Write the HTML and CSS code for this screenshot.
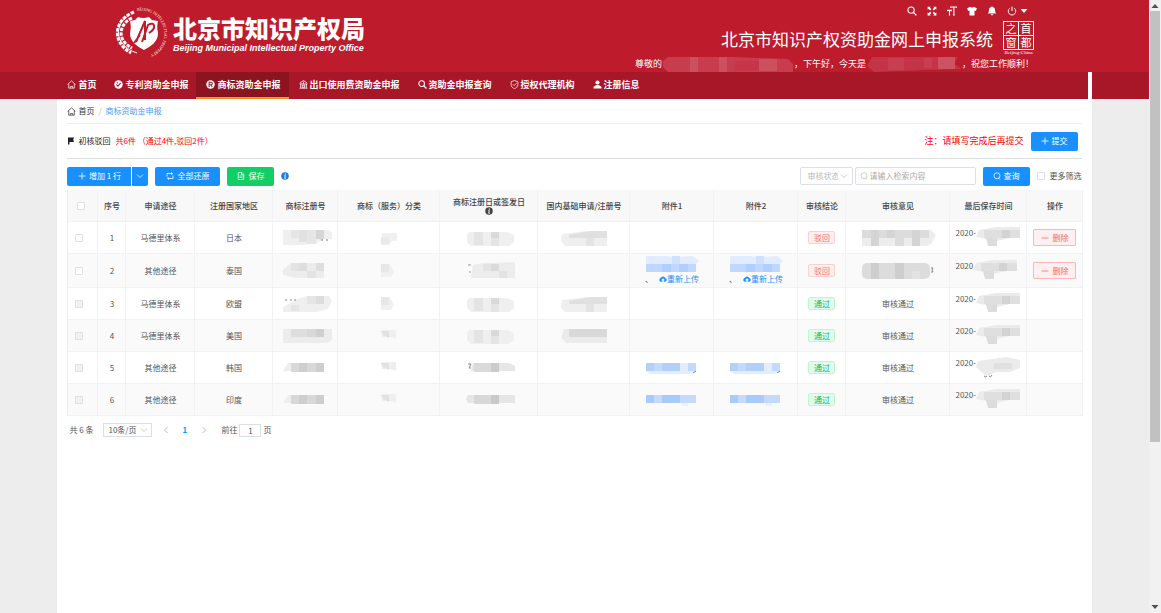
FILE: index.html
```html
<!DOCTYPE html>
<html lang="zh-CN">
<head>
  <meta charset="UTF-8" />
  <meta name="viewport" content="width=device-width, initial-scale=1.0"/>
  <title>北京市知识产权资助金网上申报系统</title>
  <link rel="stylesheet" href="styles.css">
</head>
<body>
  <svg class="sprite" aria-hidden="true">
    <!-- icons -->
    <symbol id="i-home" viewBox="0 0 16 16"><path d="M1 8L8 1.5 15 8M3 6.5V14.5H13V6.5M6 14V11.5H10V14" fill="none" stroke="currentColor" stroke-width="1.3"/></symbol>
    <symbol id="i-patent" viewBox="0 0 16 16"><circle cx="8" cy="8" r="7.5" fill="currentColor"/><path d="M4 8l3 3 5-6M5 4l2 2" fill="none" stroke="#a71728" stroke-width="1.8"/></symbol>
    <symbol id="i-reg" viewBox="0 0 16 16"><circle cx="8" cy="8" r="7.5" fill="currentColor"/><path d="M5.5 12.5V4H9a2.2 2.2 0 0 1 0 4.5H5.5M8.5 8.5L11 12.5" fill="none" stroke="#8c1420" stroke-width="1.8"/></symbol>
    <symbol id="i-export" viewBox="0 0 16 16"><path d="M2 5L8 1l6 4M1 7h14M3 7v7M13 7v7M1 14.5h14M6 9h4v4H6zM8 3v4" fill="none" stroke="currentColor" stroke-width="1.5"/></symbol>
    <symbol id="i-search" viewBox="0 0 16 16"><circle cx="6.5" cy="6.5" r="5" fill="none" stroke="currentColor" stroke-width="1.8"/><path d="M10 10l5 5" stroke="currentColor" stroke-width="2.2"/></symbol>
    <symbol id="i-find" viewBox="0 0 16 16"><circle cx="8" cy="7.5" r="6" fill="none" stroke="currentColor" stroke-width="1.5"/><path d="M11 12l3 3" stroke="currentColor" stroke-width="1.5"/></symbol>
    <symbol id="i-shield" viewBox="0 0 16 16"><path d="M8 1l6 2v5c0 4-3 6-6 7.5C5 14 2 12 2 8V3zM5 7.5l2.5 2.5L11.5 5.5" fill="none" stroke="currentColor" stroke-width="1.3"/></symbol>
    <symbol id="i-user" viewBox="0 0 16 16"><circle cx="8" cy="4.5" r="3.7" fill="currentColor"/><path d="M1 15v-3l5-3h4l5 3v3z" fill="currentColor"/></symbol>
    <symbol id="i-expand" viewBox="0 0 16 16"><path d="M1 1h5L4.5 2.5 7 5 5 7 2.5 4.5 1 6zM15 1v5l-1.5-1.5L11 7 9 5l2.5-2.5L10 1zM1 15v-5l1.5 1.5L5 9l2 2-2.5 2.5L6 15zM15 15h-5l1.5-1.5L9 11l2-2 2.5 2.5L15 10z" fill="currentColor"/></symbol>
    <symbol id="i-font" viewBox="0 0 16 16"><path d="M6 3V1.5h10V3M11 1.5V15M9.5 14.5h3M1 8.5V7h6v1.5M4 7v8M3 14.5h2" fill="none" stroke="currentColor" stroke-width="1.7"/></symbol>
    <symbol id="i-shirt" viewBox="0 0 16 16"><path d="M5 1q3 3 6 0l5 3-2 4-2-1v8H4V7L2 8 0 4z" fill="currentColor"/></symbol>
    <symbol id="i-bell" viewBox="0 0 16 16"><path d="M8 0l1 1.5c3 .5 4 3 4 5.5 0 3 1 4 2 5H1c1-1 2-2 2-5 0-2.5 1-5 4-5.5zM6 13h4q-2 4-4 0z" fill="currentColor"/></symbol>
    <symbol id="i-power" viewBox="0 0 16 16"><path d="M4.5 3.5a6 6 0 1 0 7 0M8 1v7" fill="none" stroke="currentColor" stroke-width="1.6"/></symbol>
    <symbol id="i-caret" viewBox="0 0 16 16"><path d="M1 4h14l-7 8z" fill="currentColor"/></symbol>
    <symbol id="i-flag" viewBox="0 0 16 16"><path d="M2 1h12l-1.5 4.5L14 10H5v5H2z" fill="currentColor"/></symbol>
    <symbol id="i-plus" viewBox="0 0 16 16"><path d="M8 1v14M1 8h14" stroke="currentColor" stroke-width="1.6"/></symbol>
    <symbol id="i-minus" viewBox="0 0 16 16"><path d="M1 8h14" stroke="currentColor" stroke-width="1.6"/></symbol>
    <symbol id="i-down" viewBox="0 0 16 16"><path d="M2 5l6 6 6-6" fill="none" stroke="currentColor" stroke-width="1.6"/></symbol>
    <symbol id="i-left" viewBox="0 0 16 16"><path d="M11 2L5 8l6 6" fill="none" stroke="currentColor" stroke-width="1.6"/></symbol>
    <symbol id="i-right" viewBox="0 0 16 16"><path d="M5 2l6 6-6 6" fill="none" stroke="currentColor" stroke-width="1.6"/></symbol>
    <symbol id="i-refresh" viewBox="0 0 16 16"><path d="M2 9V3h10M10 1l3 2-2 3M14 7v6H4M6 15l-3-2 2-3" fill="none" stroke="currentColor" stroke-width="1.6"/></symbol>
    <symbol id="i-doc" viewBox="0 0 16 16"><path d="M2.5 1H10l3.5 3.5V15h-11zM9 1v4.5h4M5 8h6M5 11h6" fill="none" stroke="currentColor" stroke-width="1.5"/></symbol>
    <symbol id="i-info" viewBox="0 0 16 16"><circle cx="8" cy="8" r="7.5" fill="currentColor"/><path d="M8.5 3v2.5M7 7h1.5L7.5 12.5H9.5" fill="none" stroke="#fff" stroke-width="2"/></symbol>
    <symbol id="i-cloud" viewBox="0 0 16 16"><path d="M4 13.5a3.8 3.8 0 0 1-.5-7.5 4.8 4.8 0 0 1 9 0A3.8 3.8 0 0 1 12 13.5H9.5V10.5H12L8 6.500 4 10.5h2.5v3z" fill="currentColor"/></symbol>

    <!-- masks over private values -->
    <symbol id="m-num1" viewBox="0 0 56 20"><path d="M6 2H52L55 5V11H47L40 15 26 17H6z" fill="#efefef"/><path d="M14 2h8v8h-8zM30 2h9v14h-9z" fill="#e6e6e6"/><path d="M22 2h8v12h-8z" fill="#e1e1e1"/><path d="M39 2h8v9h-8z" fill="#d6d6d6"/><path d="M44 12h2M49 12h2" stroke="#777"/></symbol>
    <symbol id="m-num2" viewBox="0 0 56 20"><path d="M6 9L14 2H47V17H20L6 14z" fill="#ececec"/><path d="M14 2h8v8h-8zM30 10h9v7h-9z" fill="#e3e3e3"/><path d="M22 2h8v8h-8zM39 2h8v8h-8z" fill="#dedede"/></symbol>
    <symbol id="m-num3" viewBox="0 0 56 20"><path d="M20 5L30 2H52L55 7 51 15 40 18H6V13z" fill="#efefef"/><path d="M30 2h9v8h-9zM14 11h8v6h-8z" fill="#e5e5e5"/><path d="M39 2h8v8h-8z" fill="#dcdcdc"/><path d="M8 6h2M13 6h2M17 6h2" stroke="#888"/></symbol>
    <symbol id="m-num4" viewBox="0 0 56 20"><path d="M6 3H55V14L50 17H6z" fill="#ececec"/><path d="M14 3h33v8H14z" fill="#dedede"/><path d="M30 3h9v8h-9z" fill="#d8d8d8"/><path d="M39 3h8v8h-8z" fill="#cfcfcf"/></symbol>
    <symbol id="m-num5" viewBox="0 0 56 20"><path d="M6 13l5-8h3v8z" fill="#eee"/><path d="M14 5h33v9H14z" fill="#d8d8d8"/><path d="M22 5h8v9h-8zM39 5h8v9h-8z" fill="#cecece"/></symbol>
    <symbol id="m-cat1" viewBox="0 0 20 20"><path d="M3 5h15v8h-5l-3 4H2z" fill="#f0f0f0"/><path d="M2 9h8v7H2z" fill="#e9e9e9"/></symbol>
    <symbol id="m-cat2" viewBox="0 0 20 20"><path d="M2 3h9l4 8-3 5H2z" fill="#f0f0f0"/><path d="M2 3h8v8H2z" fill="#e7e7e7"/></symbol>
    <symbol id="m-cat3" viewBox="0 0 20 20"><path d="M2 4h15v9l-6-2H3z" fill="#efefef"/><path d="M2 5h8v7L4 9z" fill="#e2e2e2"/></symbol>
    <symbol id="m-date1" viewBox="0 0 60 20"><path d="M10 4H48L55 7V14L50 18H12L8 14V7z" fill="#efefef"/><path d="M15 4h9v13h-9zM32 10h8v8h-8z" fill="#e4e4e4"/><path d="M32 4h8v6h-8z" fill="#d9d9d9"/></symbol>
    <symbol id="m-date2" viewBox="0 0 60 20"><path d="M14 4L24 2 56 1V17H12z" fill="#ececec"/><path d="M24 3h8v7h-8zM40 10h8v7h-8z" fill="#e3e3e3"/><path d="M32 3h8v7h-8z" fill="#dadada"/><path d="M9 4h3M10 11h2" stroke="#999"/></symbol>
    <symbol id="m-date5" viewBox="0 0 60 20"><path d="M14 5H50L56 8V13H12z" fill="#e6e6e6"/><path d="M15 5h25v9H15z" fill="#dadada"/><path d="M32 5h8v9h-8z" fill="#cbcbcb"/><path d="M9 6h3l-2 4h2" fill="none" stroke="#888"/></symbol>
    <symbol id="m-date6" viewBox="0 0 60 20"><path d="M9 5H56V13H9L7 9z" fill="#e6e6e6"/><path d="M15 5h25v9H15z" fill="#d8d8d8"/><path d="M32 5h8v9h-8z" fill="#c9c9c9"/></symbol>
    <symbol id="m-base1" viewBox="0 0 60 20"><path d="M8 6L34 3H53V18H11L7 13z" fill="#efefef"/><path d="M15 7L36 3H53V10H15z" fill="#e0e0e0"/><path d="M32 10h8v8h-8z" fill="#e4e4e4"/></symbol>
    <symbol id="m-base4" viewBox="0 0 60 20"><path d="M10 3H53V17H12L7 12z" fill="#ebebeb"/><path d="M15 3h38v8H15z" fill="#d9d9d9"/></symbol>
    <symbol id="m-file2" viewBox="0 0 56 17"><path d="M2 0h18l14 1 15-1 6 5-4 4H2z" fill="#e1ecff"/><path d="M2 8h50v8H2z" fill="#bfd8ff"/><path d="M18 8h9v8h-9zM35 8h9v8h-9z" fill="#b0ceff"/><path d="M28 0h8v8h-8z" fill="#cfe1ff"/></symbol>
    <symbol id="m-file5" viewBox="0 0 56 17"><path d="M2 4h50v8l-6 3H6L2 12z" fill="#e3edfe"/><path d="M2 4h34v8H2z" fill="#b2d0fa"/><path d="M44 4h8v8h-8zM10 4h8v8h-8z" fill="#c2dafb"/><path d="M49 14l3-2" stroke="#5585c9"/></symbol>
    <symbol id="m-file6" viewBox="0 0 56 17"><path d="M2 4h50v8H2z" fill="#c3dafd"/><path d="M2 4h8v8H2zM18 4h18v8H18z" fill="#a9cbfb"/><path d="M38 12h6v3h-6z" fill="#e5efff"/></symbol>
    <symbol id="m-op1" viewBox="0 0 76 20"><path d="M2 2H71L76 7 72 15 68 18H2z" fill="#ededed"/><path d="M2 2h67v8H2z" fill="#dcdcdc"/><path d="M11 2h8v16h-8zM27 2h8v8h-8zM52 2h8v16h-8z" fill="#d4d4d4"/><path d="M35 10h9v8h-9z" fill="#dcdcdc"/></symbol>
    <symbol id="m-op2" viewBox="0 0 76 20"><rect x="2" y="2" width="68" height="16" rx="5" fill="#dcdcdc"/><path d="M11 2h8v16h-8zM35 2h9v16h-9z" fill="#cecece"/><path d="M52 10h8v8h-8z" fill="#e3e3e3"/><path d="M71 7h2l-1 2 1 2h-2" fill="none" stroke="#888" stroke-width="1"/></symbol>
    <symbol id="m-time1" viewBox="0 0 46 22"><path d="M3 3L20 0H44V11H34L20 14 0 10z" fill="#ebebeb"/><path d="M8 3h36v8H8z" fill="#dfdfdf"/><path d="M26 3h8v8h-8z" fill="#d3d3d3"/><path d="M10 11h11v8H12z" fill="#dcdcdc"/></symbol>
    <symbol id="m-time5" viewBox="0 0 46 22"><path d="M2 4L30 0 44 3V11L34 15H20L10 19 0 10z" fill="#ebebeb"/><path d="M18 6h18v6H18z" fill="#e0e0e0"/><path d="M8 19q2 2 3 0M13 19q2 2 3-1" fill="none" stroke="#888"/></symbol>
    <symbol id="m-hello" viewBox="0 0 132 16"><path d="M6 1H70L126 3 131 8V16H6L1 11V5z" fill="#c73d4e"/><path d="M28 1h8v15h-8zM57 1h8v15h-8zM97 3h18v12H97z" fill="#cc5060"/><path d="M73 5h24v10H73z" fill="#c53748"/></symbol>
    <symbol id="m-today" viewBox="0 0 96 16"><path d="M6 1H92L88 8 96 13 60 14 8 16 1 10z" fill="#c33546"/><path d="M22 2h16v12H22zM58 2h8v10h-8z" fill="#c73f50"/><path d="M72 1h17v12H72z" fill="#cc5362"/></symbol>
  </svg>

  <div class="window">
    <div class="page">
      <header class="header">
        <div class="brand">
          <svg class="emblem" viewBox="0 0 56 56">
            <defs><path id="ring" d="M22 6A23 23 0 1 1 18 50"/></defs>
            <text class="ring-text"><textPath href="#ring">BEIJING INTELLECTUAL PROPERTY</textPath></text>
            <g fill="none" stroke="#fff" stroke-width="3" stroke-dasharray="3.5 1.2">
              <path d="M19 7C0 14-5 36 16 48"/>
              <path d="M17 13C4 19 1 35 17 43"/>
            </g>
            <path d="M15 10C-1 18-2 40 22 48" fill="none" stroke="#fff" stroke-width="1"/>
            <path d="M15 16l5-1 3-3q5 2 11 0l3 3 6 1c-1 5-1 7 0 12 0 9-7 13-14 17-7-4-14-8-14-17 1-5 1-7 0-12z" fill="#fff"/>
            <path d="M21 37L30 16V35M27 37L33 20C40 16 42 23 34 28M25 30l-6 8" fill="none" stroke="#be1b2c" stroke-width="2"/>
          </svg>
          <div class="brand-text">
            <div class="brand-cn">北京市知识产权局</div>
            <div class="brand-en">Beijing Municipal Intellectual Property Office</div>
          </div>
        </div>
        <div class="header-right">
          <div class="tools">
            <button aria-label="搜索"><svg class="icon-md"><use href="#i-search"/></svg></button>
            <button aria-label="全屏"><svg class="icon-md"><use href="#i-expand"/></svg></button>
            <button aria-label="字号"><svg class="icon-md"><use href="#i-font"/></svg></button>
            <button aria-label="主题"><svg class="icon-md"><use href="#i-shirt"/></svg></button>
            <button aria-label="通知"><svg class="icon-md"><use href="#i-bell"/></svg></button>
            <button aria-label="退出" class="power"><svg class="icon-md"><use href="#i-power"/></svg><svg class="icon-sm"><use href="#i-caret"/></svg></button>
          </div>
          <div class="system">
            <h1>北京市知识产权资助金网上申报系统</h1>
            <div class="stamp">
              <div class="stamp-grid"><span>之</span><span>首</span><span>窗</span><span>都</span></div>
              <div class="stamp-en">Beijing-China</div>
            </div>
          </div>
          <div class="hello">
            <span>尊敬的</span><svg class="mask-hello"><use href="#m-hello"/></svg><span>，下午好，今天是</span><svg class="mask-today"><use href="#m-today"/></svg><span>，祝您工作顺利！</span>
          </div>
        </div>
      </header>

      <nav class="nav">
        <div class="nav-inner">
          <a href="#"><svg class="icon"><use href="#i-home"/></svg>首页</a>
          <a href="#"><svg class="icon"><use href="#i-patent"/></svg>专利资助金申报</a>
          <a href="#" class="active"><svg class="icon"><use href="#i-reg"/></svg>商标资助金申报</a>
          <a href="#"><svg class="icon"><use href="#i-export"/></svg>出口使用费资助金申报</a>
          <a href="#"><svg class="icon"><use href="#i-search"/></svg>资助金申报查询</a>
          <a href="#"><svg class="icon"><use href="#i-shield"/></svg>授权代理机构</a>
          <a href="#"><svg class="icon"><use href="#i-user"/></svg>注册信息</a>
        </div>
      </nav>

      <main class="content">
        <div class="breadcrumb">
          <svg class="icon"><use href="#i-home"/></svg><a href="#">首页</a><i>/</i><a href="#" class="current">商标资助金申报</a>
        </div>

        <div class="status">
          <svg class="icon-sm"><use href="#i-flag"/></svg>
          <span>初核驳回</span>
          <span class="count">共6件 （通过4件,驳回2件）</span>
          <span class="note">注：请填写完成后再提交</span>
          <button class="btn"><svg class="icon-sm"><use href="#i-plus"/></svg>提交</button>
        </div>

        <div class="toolbar">
          <div class="btn-group">
            <button class="btn btn-add"><svg class="icon-sm"><use href="#i-plus"/></svg>增加 1 行</button>
            <button class="btn btn-more" aria-label="更多"><svg class="icon-sm"><use href="#i-down"/></svg></button>
          </div>
          <button class="btn btn-reset"><svg class="icon-sm"><use href="#i-refresh"/></svg>全部还原</button>
          <button class="btn btn-save"><svg class="icon-sm"><use href="#i-doc"/></svg>保存</button>
          <svg class="icon-sm tip"><use href="#i-info"/></svg>
          <div class="filters">
            <div class="select state">
              <select aria-label="审核状态"><option>审核状态</option></select>
              <svg class="icon-sm"><use href="#i-down"/></svg>
            </div>
            <div class="search">
              <svg class="icon-sm"><use href="#i-find"/></svg>
              <input type="text" placeholder="请输入检索内容" aria-label="检索内容">
            </div>
            <button class="btn"><svg class="icon-sm"><use href="#i-find"/></svg>查询</button>
            <label class="more"><input type="checkbox">更多筛选</label>
          </div>
        </div>

        <table>
          <colgroup>
            <col class="c-check"><col class="c-no"><col class="c-way"><col class="c-area"><col class="c-num"><col class="c-cat"><col class="c-date"><col class="c-base"><col class="c-file"><col class="c-file"><col class="c-result"><col class="c-opinion"><col class="c-time"><col class="c-op">
          </colgroup>
          <thead>
            <tr>
              <th class="check-all"><input type="checkbox" aria-label="全选"></th>
              <th>序号</th>
              <th>申请途径</th>
              <th>注册国家地区</th>
              <th>商标注册号</th>
              <th>商标（服务）分类</th>
              <th>商标注册日或签发日<svg class="icon-sm th-tip"><use href="#i-info"/></svg></th>
              <th>国内基础申请/注册号</th>
              <th>附件1</th>
              <th>附件2</th>
              <th>审核结论</th>
              <th>审核意见</th>
              <th>最后保存时间</th>
              <th>操作</th>
            </tr>
          </thead>
          <tbody>
            <tr>
              <td class="check"><input type="checkbox" aria-label="选择第1行"></td>
              <td>1</td>
              <td>马德里体系</td>
              <td>日本</td>
              <td><svg class="m-num"><use href="#m-num1"/></svg></td>
              <td><svg class="m-cat"><use href="#m-cat1"/></svg></td>
              <td><svg class="m-date"><use href="#m-date1"/></svg></td>
              <td><svg class="m-date"><use href="#m-base1"/></svg></td>
              <td></td>
              <td></td>
              <td><span class="tag tag-no">驳回</span></td>
              <td><svg class="m-op"><use href="#m-op1"/></svg></td>
              <td><div class="time">2020-<svg><use href="#m-time1"/></svg></div></td>
              <td><button class="btn-del"><svg class="icon-sm"><use href="#i-minus"/></svg>删除</button></td>
            </tr>
            <tr class="tall">
              <td class="check"><input type="checkbox" aria-label="选择第2行"></td>
              <td>2</td>
              <td>其他途径</td>
              <td>泰国</td>
              <td><svg class="m-num"><use href="#m-num2"/></svg></td>
              <td><svg class="m-cat"><use href="#m-cat2"/></svg></td>
              <td><svg class="m-date"><use href="#m-date2"/></svg></td>
              <td></td>
              <td><svg class="m-file"><use href="#m-file2"/></svg><div class="upload">、 <a href="#"><svg class="icon-sm"><use href="#i-cloud"/></svg>重新上传</a></div></td>
              <td><svg class="m-file"><use href="#m-file2"/></svg><div class="upload">、 <a href="#"><svg class="icon-sm"><use href="#i-cloud"/></svg>重新上传</a></div></td>
              <td><span class="tag tag-no">驳回</span></td>
              <td><svg class="m-op"><use href="#m-op2"/></svg></td>
              <td><div class="time">2020<svg><use href="#m-time1"/></svg></div></td>
              <td><button class="btn-del"><svg class="icon-sm"><use href="#i-minus"/></svg>删除</button></td>
            </tr>
            <tr>
              <td class="check"><input type="checkbox" disabled aria-label="选择第3行"></td>
              <td>3</td>
              <td>马德里体系</td>
              <td>欧盟</td>
              <td><svg class="m-num"><use href="#m-num3"/></svg></td>
              <td><svg class="m-cat"><use href="#m-cat2"/></svg></td>
              <td><svg class="m-date"><use href="#m-date1"/></svg></td>
              <td><svg class="m-date"><use href="#m-base1"/></svg></td>
              <td></td>
              <td></td>
              <td><span class="tag tag-ok">通过</span></td>
              <td>审核通过</td>
              <td><div class="time">2020-<svg><use href="#m-time1"/></svg></div></td>
              <td></td>
            </tr>
            <tr>
              <td class="check"><input type="checkbox" disabled aria-label="选择第4行"></td>
              <td>4</td>
              <td>马德里体系</td>
              <td>美国</td>
              <td><svg class="m-num"><use href="#m-num4"/></svg></td>
              <td><svg class="m-cat"><use href="#m-cat3"/></svg></td>
              <td><svg class="m-date"><use href="#m-date1"/></svg></td>
              <td><svg class="m-date"><use href="#m-base4"/></svg></td>
              <td></td>
              <td></td>
              <td><span class="tag tag-ok">通过</span></td>
              <td>审核通过</td>
              <td><div class="time">2020-<svg><use href="#m-time1"/></svg></div></td>
              <td></td>
            </tr>
            <tr>
              <td class="check"><input type="checkbox" disabled aria-label="选择第5行"></td>
              <td>5</td>
              <td>其他途径</td>
              <td>韩国</td>
              <td><svg class="m-num"><use href="#m-num5"/></svg></td>
              <td><svg class="m-cat"><use href="#m-cat3"/></svg></td>
              <td><svg class="m-date"><use href="#m-date5"/></svg></td>
              <td></td>
              <td><svg class="m-file"><use href="#m-file5"/></svg></td>
              <td><svg class="m-file"><use href="#m-file5"/></svg></td>
              <td><span class="tag tag-ok">通过</span></td>
              <td>审核通过</td>
              <td><div class="time">2020-<svg><use href="#m-time5"/></svg></div></td>
              <td></td>
            </tr>
            <tr>
              <td class="check"><input type="checkbox" disabled aria-label="选择第6行"></td>
              <td>6</td>
              <td>其他途径</td>
              <td>印度</td>
              <td><svg class="m-num"><use href="#m-num5"/></svg></td>
              <td><svg class="m-cat"><use href="#m-cat3"/></svg></td>
              <td><svg class="m-date"><use href="#m-date6"/></svg></td>
              <td></td>
              <td><svg class="m-file"><use href="#m-file6"/></svg></td>
              <td><svg class="m-file"><use href="#m-file6"/></svg></td>
              <td><span class="tag tag-ok">通过</span></td>
              <td>审核通过</td>
              <td><div class="time">2020-<svg><use href="#m-time1"/></svg></div></td>
              <td></td>
            </tr>
          </tbody>
        </table>

        <div class="pagination">
          <span>共 6 条</span>
          <div class="select size">
            <select aria-label="每页条数"><option>10条/页</option></select>
            <svg class="icon-sm"><use href="#i-down"/></svg>
          </div>
          <button aria-label="上一页"><svg class="icon-sm"><use href="#i-left"/></svg></button>
          <button class="on">1</button>
          <button aria-label="下一页"><svg class="icon-sm"><use href="#i-right"/></svg></button>
          <label class="jump">前往<input type="text" value="1">页</label>
        </div>
      </main>
    </div>

    <div class="scrollbar">
      <svg class="icon-sm flip"><use href="#i-caret"/></svg>
      <div class="track"><div class="thumb"></div></div>
      <svg class="icon-sm"><use href="#i-caret"/></svg>
    </div>
  </div>
</body>
</html>
```
FILE: styles.css
```css
* {
  box-sizing: border-box;
}

body {
  margin: 0;
  font-family: "Noto Sans CJK SC", "Open Sans", sans-serif;
  font-size: 8px;
  line-height: 12px;
  color: #555;
  background-color: #ededed;
}

button, input, select {
  font: inherit;
  color: inherit;
  margin: 0;
  padding: 0;
  border: none;
  background: none;
}

button {
  cursor: pointer;
}

a {
  color: inherit;
  text-decoration: none;
}

svg {
  display: block;
  flex: none;
}

.sprite {
  display: none;
}

.icon {
  width: 9px;
  height: 9px;
}

.icon-sm {
  width: 8px;
  height: 8px;
}

.icon-md {
  width: 10px;
  height: 10px;
}

input[type="checkbox"] {
  appearance: none;
  display: block;
  width: 8px;
  height: 8px;
  margin: 0 auto;
  background-color: #fff;
  border: 1px solid #dcdfe6;
  border-radius: 1px;
}

input[type="checkbox"]:disabled {
  background-color: #f0f1f3;
}

.window {
  display: flex;
  min-height: 100vh;
}

.page {
  flex: 1;
  display: flex;
  flex-direction: column;
}

/* header */
.header {
  display: flex;
  justify-content: space-between;
  padding: 5px 10% 0;
  height: 72px;
  background-color: #be1b2c;
  color: #fff;
}

.brand {
  display: flex;
  align-items: flex-start;
  gap: 2px;
}

.emblem {
  width: 56px;
  height: 56px;
}

.ring-text {
  font-family: "Liberation Serif", serif;
  font-size: 4px;
  fill: #fff;
}

.brand-cn {
  margin-top: 8px;
  font-size: 24px;
  line-height: 30px;
  font-weight: 900;
}

.brand-en {
  font-family: "Liberation Sans", sans-serif;
  font-size: 9px;
  line-height: 10px;
  font-weight: bold;
  font-style: italic;
}

.header-right {
  display: flex;
  flex-direction: column;
  align-items: flex-end;
}

.tools {
  display: flex;
  gap: 10px;
  height: 12px;
  padding-right: 6px;
}

.power {
  display: flex;
  align-items: center;
  gap: 3px;
}

.system {
  display: flex;
  align-items: center;
  gap: 10px;
  margin-top: 4px;
}

.system h1 {
  margin: 0;
  font-size: 17px;
  line-height: 24px;
  font-weight: normal;
}

.stamp {
  width: 31px;
}

.stamp-grid {
  display: grid;
  grid-template-columns: 1fr 1fr;
  gap: 1px;
  border: 1px solid #fff;
  background-color: #fff;
}

.stamp-grid span {
  background-color: #be1b2c;
  font-size: 11px;
  line-height: 13px;
  text-align: center;
}

.stamp-en {
  font-family: "Liberation Serif", serif;
  font-size: 5px;
  line-height: 6px;
  text-align: center;
}

.hello {
  display: flex;
  align-items: center;
  font-size: 9px;
  line-height: 16px;
}

.mask-hello {
  width: 132px;
  height: 16px;
}

.mask-today {
  width: 96px;
  height: 16px;
}

/* nav */
.nav {
  background-color: #a71728;
  color: #fff;
}

.nav-inner {
  display: flex;
  width: 90%;
  margin: 0 auto;
  border-right: 4px solid #fff;
}

.nav a {
  display: flex;
  align-items: center;
  gap: 2px;
  height: 27px;
  padding: 0 8px 0 10px;
  font-size: 9px;
  font-weight: bold;
  border-bottom: 2px solid transparent;
}

.nav a.active {
  background-color: #8c1420;
  border-bottom-color: #e6971e;
}

/* content */
.content {
  flex: 1;
  width: 90%;
  margin: 0 auto;
  padding: 0 10px;
  background-color: #fff;
}

.breadcrumb {
  display: flex;
  align-items: center;
  gap: 2px;
  height: 25px;
  color: #333;
  border-bottom: 1px solid #eee;
}

.breadcrumb i {
  margin: 0 2px;
  font-style: normal;
  color: #bbb;
}

.breadcrumb .current {
  color: #409eff;
}

.status {
  display: flex;
  align-items: center;
  gap: 3px;
  height: 35px;
  padding-right: 4px;
  color: #222;
  border-bottom: 1px solid #ddd;
}

.count {
  margin-left: 2px;
  color: #f00;
}

.note {
  margin-left: auto;
  margin-right: 4px;
  font-size: 9px;
  color: #f00;
}

.btn {
  display: flex;
  align-items: center;
  justify-content: center;
  gap: 3px;
  height: 19px;
  min-width: 47px;
  color: #fff;
  background-color: #1890ff;
  border-radius: 2px;
}

.toolbar {
  display: flex;
  align-items: center;
  gap: 7px;
  height: 31px;
  padding-top: 3px;
}

.btn-group {
  display: flex;
  gap: 1px;
}

.btn-add {
  width: 64px;
  border-radius: 2px 0 0 2px;
}

.btn-more {
  min-width: 16px;
  border-radius: 0 2px 2px 0;
}

.btn-reset {
  width: 65px;
}

.btn-save {
  background-color: #13ce66;
}

.tip {
  color: #1a7de0;
}

.filters {
  display: flex;
  align-items: center;
  gap: 7px;
  margin-left: auto;
}

.select, .search {
  display: flex;
  align-items: center;
  gap: 2px;
  border: 1px solid #dcdfe6;
  border-radius: 2px;
  color: #bbb;
}

.select select {
  appearance: none;
  flex: 1;
  min-width: 0;
}

.state {
  width: 53px;
  height: 18px;
  padding: 0 4px 0 7px;
  margin-right: -5px;
}

.search {
  width: 121px;
  height: 18px;
  padding: 0 4px;
}

.search input {
  width: 100%;
}

.search input::placeholder {
  color: #aaa;
}

.more {
  display: flex;
  align-items: center;
  gap: 5px;
}

/* table */
table {
  width: 100%;
  table-layout: fixed;
  border-collapse: separate;
  border-spacing: 0;
  border-left: 1px solid #ebeef5;
  text-align: center;
}

.c-check { width: 30px; }
.c-no { width: 28px; }
.c-way { width: 69px; }
.c-area { width: 78px; }
.c-num { width: 65px; }
.c-cat { width: 102px; }
.c-date { width: 98px; }
.c-base { width: 92px; }
.c-file { width: 84px; }
.c-result { width: 48px; }
.c-opinion { width: 104px; }
.c-time { width: 77px; }
.c-op { width: 56px; }

th, td {
  padding: 0;
  height: 32px;
  border-right: 1px solid #f0f2f5;
  border-bottom: 1px solid #f0f2f5;
}

th {
  font-weight: 500;
  line-height: 11px;
  color: #444;
  background-color: #f8f8f9;
}

.tall td {
  height: 34px;
}

tbody tr:nth-child(even) {
  background-color: #fafafa;
}

td svg, .th-tip {
  margin: 0 auto;
}

.check-all {
  padding-right: 3px;
}

.check {
  padding-right: 7px;
}

.m-num {
  width: 56px;
  height: 20px;
}

.m-cat {
  width: 20px;
  height: 20px;
}

.m-date {
  width: 60px;
  height: 20px;
}

.m-file {
  width: 56px;
  height: 17px;
}

.m-op {
  width: 76px;
  height: 20px;
}

.upload, .upload a {
  display: flex;
  align-items: center;
  justify-content: center;
}

.upload {
  gap: 6px;
}

.upload a {
  color: #1890ff;
}

.tag {
  display: inline-block;
  width: 27px;
  line-height: 11px;
  border: 1px solid;
  border-radius: 2px;
}

.tag-no {
  color: #f56c6c;
  background-color: #fef0f0;
  border-color: #fbd0d0;
}

.tag-ok {
  color: #13b85c;
  background-color: #e1fbec;
  border-color: #bff3d4;
}

.time {
  display: flex;
  padding-left: 5px;
}

.time svg {
  width: 46px;
  height: 22px;
  margin: 0;
}

.btn-del {
  display: flex;
  align-items: center;
  justify-content: center;
  gap: 3px;
  width: 43px;
  height: 17px;
  margin: 0 auto;
  color: #f56c6c;
  background-color: #fef0f0;
  border: 1px solid #fbb6b6;
  border-radius: 1px;
}

.btn-del svg {
  margin: 0;
}

/* pagination */
.pagination {
  display: flex;
  align-items: center;
  height: 28px;
  padding-left: 2px;
}

.size {
  width: 49px;
  height: 14px;
  margin: 0 4px 0 10px;
  padding: 0 3px 0 4px;
  border-radius: 0;
}

.size select {
  color: #555;
}

.pagination button {
  width: 19px;
  display: flex;
  justify-content: center;
  color: #aaa;
}

.pagination .on {
  font-weight: bold;
  color: #1890ff;
}

.jump {
  display: flex;
  align-items: center;
  gap: 2px;
  margin-left: 8px;
}

.jump input {
  width: 22px;
  height: 13px;
  border: 1px solid #dcdfe6;
  text-align: center;
}

/* scrollbar */
.scrollbar {
  display: flex;
  flex-direction: column;
  align-items: center;
  width: 12px;
  padding: 2px 1px;
  background-color: #f1f1f1;
  color: #505050;
}

.flip {
  transform: rotate(180deg);
}

.track {
  flex: 1;
  align-self: stretch;
  margin: 1px 0;
}

.thumb {
  height: 73%;
  background-color: #c1c1c1;
}
```
